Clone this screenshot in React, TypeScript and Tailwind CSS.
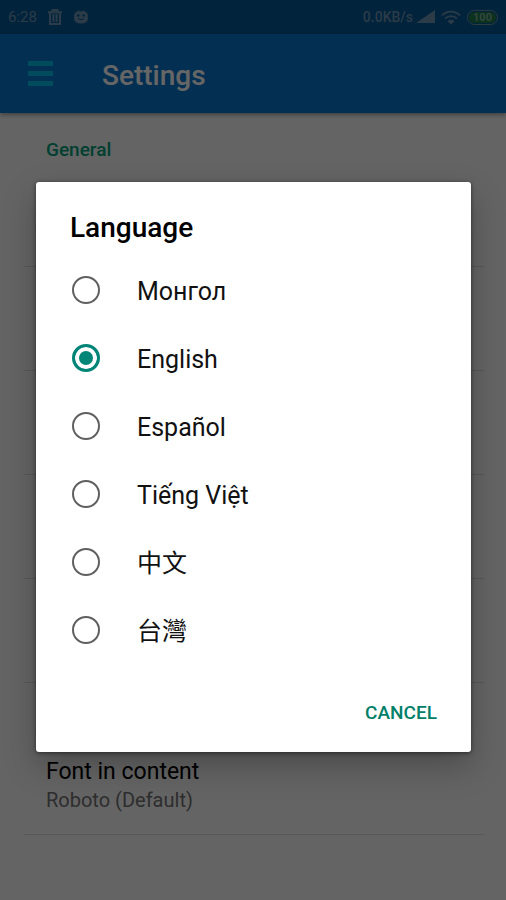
import React, { useState } from 'react';

const languages = [
  { id: 'mn', label: 'Монгол' },
  { id: 'en', label: 'English' },
  { id: 'es', label: 'Español' },
  { id: 'vi', label: 'Tiếng Việt' },
  { id: 'zh-CN', label: '中文' },
  { id: 'zh-TW', label: '台灣' },
];

const StatusBar: React.FC = () => (
  <div className="h-[34px] px-2 bg-[#055796] text-[#6b93b3] flex items-center justify-between">
    <div className="flex items-center">
      <span className="text-[15px]">6:28</span>
      <svg className="w-4 h-4 ml-[10px]" viewBox="0 0 16 16" fill="none" stroke="currentColor" strokeWidth="2">
        <path d="M1 3.200h14M5.500 3V1h5v2M3 3.500V15h10V3.500M6.400 5v8M9.600 5v8" />
      </svg>
      <svg className="w-4 h-4 ml-[10px]" viewBox="0 0 16 16" fill="currentColor">
        <path d="M5 0l1 2.200h4L11 0v2.300c2 .5 3.300 1.700 3.800 3.200v5c-.8 2.400-3 4-5.800 4H7c-2.800 0-5-1.600-5.800-4v-5C1.700 4 3 2.800 5 2.300z" />
        <circle cx="5.300" cy="6.500" r="1.200" fill="#055796" />
        <circle cx="10.700" cy="6.500" r="1.200" fill="#055796" />
        <path d="M5 9.500q3 2.400 6 0" fill="none" stroke="#055796" />
      </svg>
    </div>
    <div className="flex items-center">
      <span className="text-sm font-medium">0.0KB/s</span>
      <svg className="w-5 h-[14px] ml-[3px]" viewBox="0 0 20 14" fill="currentColor">
        <path d="M0 13L19 0v13z" />
      </svg>
      <svg className="w-5 h-[15px] ml-[5px]" viewBox="0 0 20 15" fill="none" stroke="currentColor" strokeWidth="1.700">
        <path d="M1 5.500C6 .4 14 .4 19 5.500M4 8.600c3.400-3.400 8.600-3.400 12 0" />
        <path d="M6.600 11.200c2-1.900 4.800-1.900 6.800 0L10 14.500z" fill="currentColor" stroke="none" />
      </svg>
      <span className="w-[31px] h-[15px] ml-[6px] rounded-full border border-[#6b93a0] p-px flex">
        <span className="flex-1 rounded-full bg-[#1f7a4a] text-[11px] leading-[11px] font-bold text-[#7fb0a0] text-center">
          100
        </span>
      </span>
    </div>
  </div>
);

const AppBar: React.FC = () => (
  <header className="relative h-[79px] px-7 bg-[#0877cd] shadow-[0_2px_4px_rgba(0,0,0,0.35)] flex items-center">
    <button type="button" aria-label="Open menu" className="flex flex-col gap-[5px]">
      <span className="w-[25px] h-[5px] bg-[#04bde6]" />
      <span className="w-[25px] h-[5px] bg-[#04bde6]" />
      <span className="w-[25px] h-[5px] bg-[#04bde6]" />
    </button>
    <h1 className="ml-[49px] pt-1 text-[28px] font-medium text-white">Settings</h1>
  </header>
);

const SettingsList: React.FC = () => (
  <main className="pl-6 pr-[22px]">
    <h2 className="h-[50px] px-[22px] pt-6 text-[19px] leading-[26px] font-medium text-[#00a17a]">General</h2>
    <div className="h-[104px] border-b border-[#dcdcdc]" />
    <div className="h-[104px] border-b border-[#dcdcdc]" />
    <div className="h-[104px] border-b border-[#dcdcdc]" />
    <div className="h-[104px] border-b border-[#dcdcdc]" />
    <div className="h-[104px] border-b border-[#dcdcdc]" />
    <div className="h-[152px] px-[22px] pb-5 border-b border-[#dcdcdc] flex flex-col justify-end">
      <p className="text-[23px] leading-7 text-black">Font in content</p>
      <p className="text-[20px] leading-7 text-[#737373]">Roboto (Default)</p>
    </div>
  </main>
);

export default function App() {
  const [open, setOpen] = useState(true);
  const [language, setLanguage] = useState('en');

  return (
    <div className="relative min-h-screen bg-[#fafafa] font-['Roboto','Noto_Sans_CJK_SC',sans-serif]">
      <StatusBar />
      <AppBar />
      <SettingsList />

      {open && (
        <div className="absolute inset-0 pl-9 pr-[35px] pt-[34px] bg-black/60 flex items-center justify-center">
          <div
            role="dialog"
            aria-labelledby="language-title"
            className="w-full rounded-[3px] bg-white shadow-[0_14px_32px_rgba(0,0,0,0.25),0_1px_4px_rgba(0,0,0,0.5)]"
          >
            <h2 id="language-title" className="px-[34px] pt-7 text-[28px] leading-9 font-medium text-black">
              Language
            </h2>
            <div role="radiogroup" aria-labelledby="language-title" className="pt-[10px]">
              {languages.map(({ id, label }) => (
                <label key={id} className="h-[68px] px-9 flex items-center gap-[37px] text-[25px] text-[#111111]">
                  <input
                    type="radio"
                    name="language"
                    value={id}
                    checked={language === id}
                    onChange={() => setLanguage(id)}
                    className="appearance-none w-7 h-7 shrink-0 rounded-full border-2 border-[#606060] checked:border-3 checked:border-[#008577] checked:bg-[#008577] checked:shadow-[inset_0_0_0_4px_#ffffff]"
                  />
                  <span className="pt-[3px]">{label}</span>
                </label>
              ))}
            </div>
            <div className="px-[34px] pt-9 pb-[26px] flex justify-end">
              <button type="button" onClick={() => setOpen(false)} className="text-[19px] leading-[26px] font-medium text-[#008068]">
                CANCEL
              </button>
            </div>
          </div>
        </div>
      )}
    </div>
  );
}
